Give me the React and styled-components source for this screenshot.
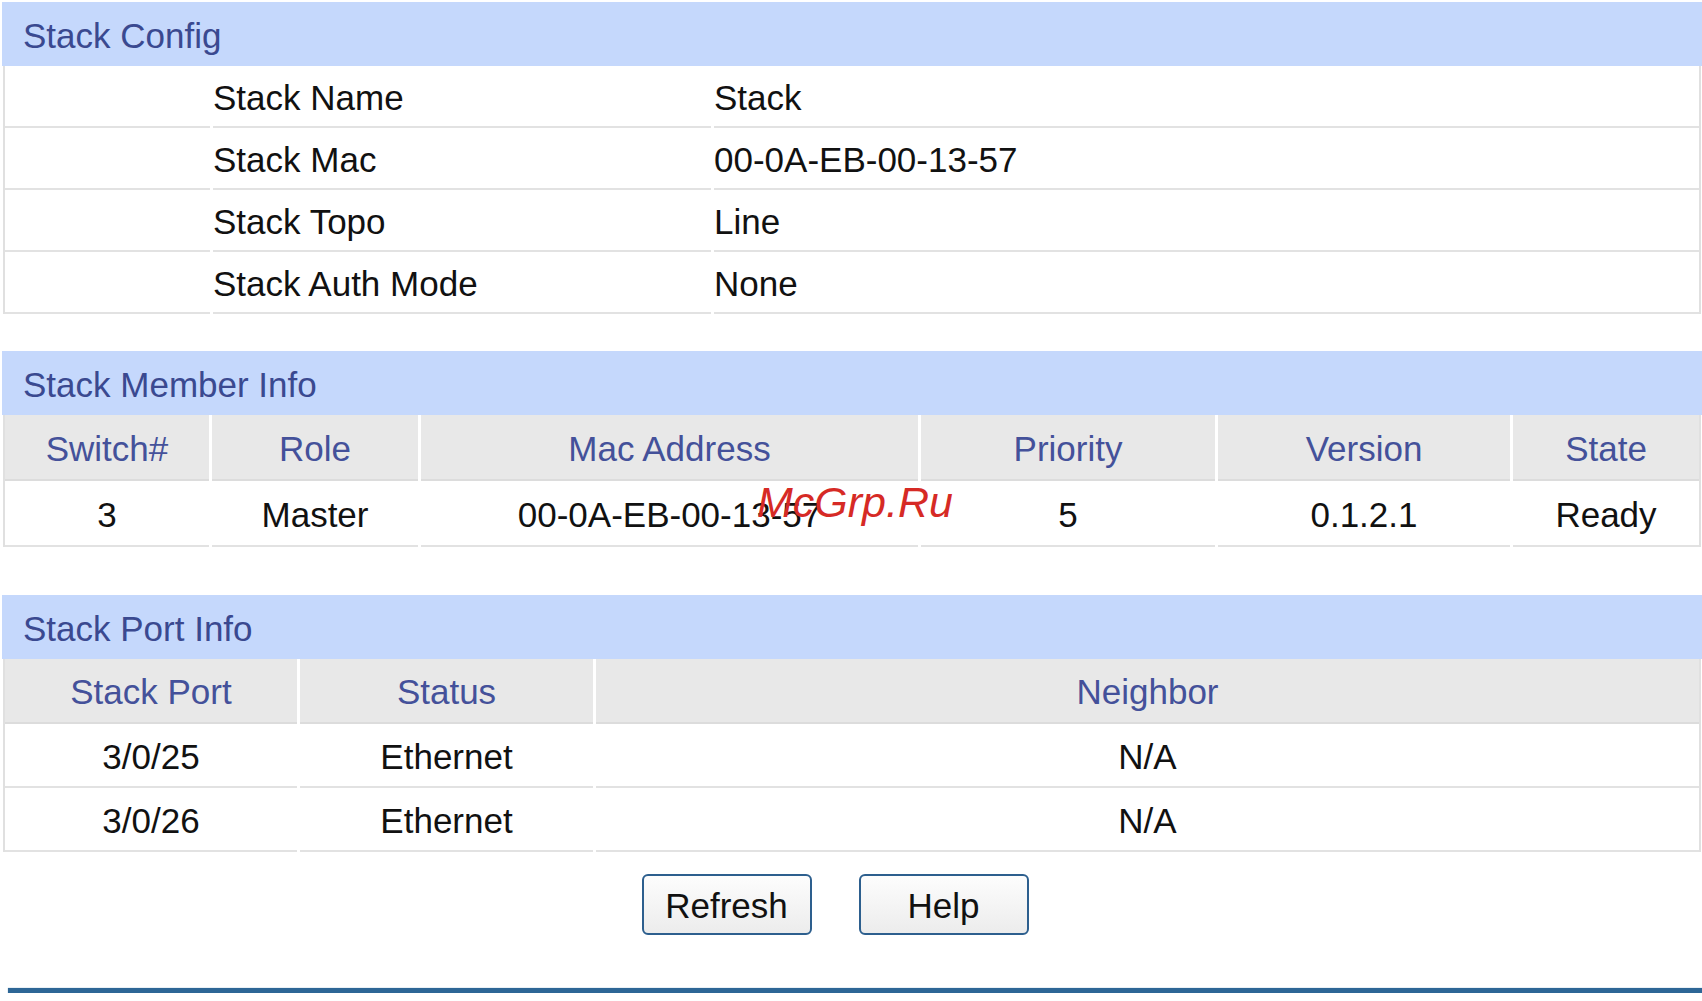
import styled, { createGlobalStyle } from "styled-components";

const GlobalStyle = createGlobalStyle`
  html, body {
    margin: 0;
    padding: 0;
    background: #fff;
  }
  body {
    font-family: "Liberation Sans", Arial, sans-serif;
  }
`;

const memberCols = "204px 206px 497px 294px 292px 1fr";
const portCols = "292px 293px 1fr";
const configCols = "205px 498px 1fr";

const App = () => {
  return (
    <>
      <GlobalStyle />
      <Page>
        <Section $gap={37}>
          <Band>Stack Config</Band>
          <Table>
            {[
              ["Stack Name", "Stack"],
              ["Stack Mac", "00-0A-EB-00-13-57"],
              ["Stack Topo", "Line"],
              ["Stack Auth Mode", "None"],
            ].map(([label, value]) => (
              <Row key={label} $cols={configCols} $h={62}>
                <Cell />
                <Cell>{label}</Cell>
                <Cell>{value}</Cell>
              </Row>
            ))}
          </Table>
        </Section>

        <Section $gap={48}>
          <Band>Stack Member Info</Band>
          <Table>
            <Row $cols={memberCols} $h={66}>
              {["Switch#", "Role", "Mac Address", "Priority", "Version", "State"].map((h) => (
                <Cell key={h} $head $center>{h}</Cell>
              ))}
            </Row>
            <Row $cols={memberCols} $h={66}>
              {["3", "Master", "00-0A-EB-00-13-57", "5", "0.1.2.1", "Ready"].map((v, i) => (
                <Cell key={i} $center>{v}</Cell>
              ))}
            </Row>
          </Table>
        </Section>

        <Section $gap={22}>
          <Band>Stack Port Info</Band>
          <Table>
            <Row $cols={portCols} $h={65}>
              {["Stack Port", "Status", "Neighbor"].map((h) => (
                <Cell key={h} $head $center>{h}</Cell>
              ))}
            </Row>
            {[
              ["3/0/25", "Ethernet", "N/A"],
              ["3/0/26", "Ethernet", "N/A"],
            ].map((r) => (
              <Row key={r[0]} $cols={portCols} $h={64}>
                {r.map((v, i) => (
                  <Cell key={i} $center>{v}</Cell>
                ))}
              </Row>
            ))}
          </Table>
        </Section>

        <Buttons>
          <Button>Refresh</Button>
          <Button>Help</Button>
        </Buttons>

        <BottomLine />

        <Watermark>McGrp.Ru</Watermark>
      </Page>
    </>
  );
};

export default App;

const Page = styled.div`
  position: relative;
  width: 1702px;
  box-sizing: border-box;
  padding: 2px 0 0 2px;
`;

const Section = styled.div`
  margin-bottom: ${(p) => p.$gap}px;
`;

const Band = styled.div`
  height: 64px;
  box-sizing: border-box;
  display: flex;
  align-items: center;
  padding: 3px 0 0 21px;
  background: #c5d8fc;
  color: #3a4990;
  font-size: 35px;
`;

const Table = styled.div`
  margin: 0 1px;
  border-left: 2px solid #e0e0e0;
  border-right: 2px solid #e0e0e0;
`;

const Row = styled.div`
  display: grid;
  grid-template-columns: ${(p) => p.$cols};
  column-gap: 3px;
  height: ${(p) => p.$h}px;
`;

const Cell = styled.div`
  display: flex;
  align-items: center;
  justify-content: ${(p) => (p.$center ? "center" : "flex-start")};
  box-sizing: border-box;
  padding-top: 3px;
  border-bottom: 2px solid ${(p) => (p.$head ? "#dcdcdc" : "#e2e2e2")};
  background: ${(p) => (p.$head ? "#e8e8e8" : "#fff")};
  color: ${(p) => (p.$head ? "#44519a" : "#111")};
  font-size: 35px;
  white-space: nowrap;
`;

const Buttons = styled.div`
  display: flex;
  justify-content: center;
  gap: 47px;
  padding-right: 34px;
`;

const Button = styled.button`
  width: 170px;
  height: 61px;
  box-sizing: border-box;
  border: 2px solid #2d5f8e;
  border-radius: 6px;
  background: linear-gradient(#fdfdfd, #ececec);
  color: #111;
  font-family: "Liberation Sans", Arial, sans-serif;
  font-size: 35px;
  padding: 3px 0 0;
  cursor: pointer;
`;

const BottomLine = styled.div`
  margin: 53px 0 0 6px;
  height: 5px;
  background: #2d6696;
  box-shadow: 0 0 1px #7fa3c4;
`;

const Watermark = styled.div`
  position: absolute;
  left: 757px;
  top: 481px;
  font-size: 43px;
  line-height: 1;
  font-style: italic;
  color: #d62a25;
  pointer-events: none;
`;
